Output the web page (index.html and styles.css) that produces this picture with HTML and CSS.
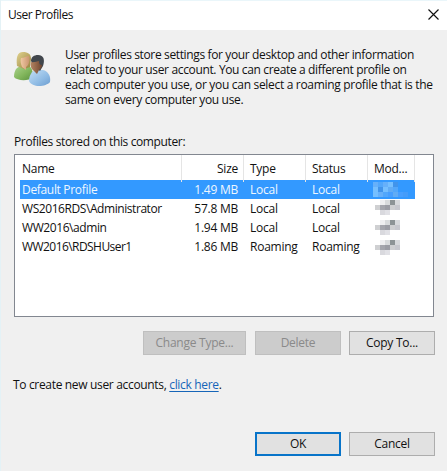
FILE: index.html
```html
<!DOCTYPE html>
<html lang="en">
<head>
<meta charset="utf-8">
<title>User Profiles</title>
<link rel="stylesheet" href="styles.css">
</head>
<body>
<svg width="0" height="0" class="defs" aria-hidden="true">
  <defs>
    <g id="mosaic" shape-rendering="crispEdges">
      <path fill="#eeeef1" d="M5 0h5v5H5z"/><path fill="#d8dadd" d="M10 0h5v5h-5zM20 0h5v5h-5z"/><path fill="#8d9496" d="M15 0h5v5h-5z"/>
      <path fill="#cfd0d2" d="M0 5h5v5H0zM15 5h5v5h-5z"/><path fill="#a4a5ad" d="M5 5h5v5H5z"/><path fill="#9b9ca5" d="M10 5h5v5h-5z"/><path fill="#c8c9cf" d="M20 5h5v5h-5z"/>
      <path fill="#d9d9de" d="M5 10h5v5H5z"/><path fill="#e1e1e6" d="M10 10h5v5h-5z"/>
    </g>
  </defs>
</svg>
<div class="dialog">
  <header class="titlebar">
    <span class="title">User Profiles</span>
    <svg class="close" width="11" height="11" viewBox="0 0 11 11"><path d="M.5.5l10 10M10.500.5l-10 10" fill="none" stroke="#111" stroke-width="1.15"/></svg>
  </header>
  <section class="intro">
    <svg class="users" width="38" height="38" viewBox="0 0 38 38">
      <defs>
        <linearGradient id="green" x2="1" y2="1"><stop stop-color="#acd28e"/><stop offset=".55" stop-color="#82b65c"/><stop offset="1" stop-color="#5a9140"/></linearGradient>
        <linearGradient id="blue" x2="1" y2="1"><stop stop-color="#c3dff6"/><stop offset=".6" stop-color="#8fbbe4"/><stop offset="1" stop-color="#6c9dd0"/></linearGradient>
        <linearGradient id="hair" x2="1" y2="1"><stop stop-color="#e1d38f"/><stop offset="1" stop-color="#97803d"/></linearGradient>
        <linearGradient id="skin" x2="1"><stop stop-color="#f0c8a2"/><stop offset="1" stop-color="#ca9570"/></linearGradient>
        <linearGradient id="face" x2="1"><stop stop-color="#b58462"/><stop offset="1" stop-color="#70452f"/></linearGradient>
      </defs>
      <path d="M1 26C1 19 4 16 8 15h8c3 2 4 5 4 12-5 3-16 3-19-1z" fill="url(#green)"/>
      <path d="M4 15C3 7 4 1 10 1c5 0 8 2 8 7l-1 8-6 2z" fill="url(#hair)"/>
      <path d="M8 7c3 0 6-2 8-2 1 4 0 9-3 11v3l-4-3c-1-3-2-6-1-9z" fill="url(#skin)"/>
      <path d="M16 30c0-6 3-10 7-11h7c5 1 8 6 7 12-4 5-18 6-21-1z" fill="url(#blue)"/>
      <path d="M18 10c0-4 3-6 7-6 6 0 7 5 5 11l-3 5-6-5z" fill="#41464c"/>
      <path d="M18 11c3 1 6-1 8-1 0 3 1 4 3 4 0 3-2 4-3 5l-2 4-3-3c-3-2-4-5-3-9z" fill="url(#face)"/>
    </svg>
    <p class="copy"><span class="l1">User profiles store settings for your desktop and other information</span><span class="l2">related to your user account. You can create a different profile on</span><span class="l3">each computer you use, or you can select a roaming profile that is the</span><span class="l4">same on every computer you use.</span></p>
  </section>
  <p class="label"><span>Profiles stored on this computer:</span></p>
  <div class="list">
    <div class="row head"><span>Name</span><span>Size</span><span>Type</span><span>Status</span><span>Mod...</span></div>
    <div class="row selected"><span class="n1">Default Profile</span><span>1.49 MB</span><span>Local</span><span>Local</span><span class="mark"><svg width="35" height="15" shape-rendering="crispEdges"><path fill="#66b0fa" d="M0 0h5v5H0zM10 0h5v5h-5zM5 10h5v5H5z"/><path fill="#52a7fb" d="M5 0h5v5H5zM20 5h5v5h-5zM10 10h5v5h-5z"/><path fill="#75bfff" d="M15 0h5v5h-5zM0 5h5v5H0zM10 5h5v5h-5zM0 10h5v5H0z"/><path fill="#4194eb" d="M5 5h5v5H5zM20 0h5v5h-5z"/><path fill="#61acf5" d="M15 5h5v5h-5zM20 10h5v5h-5z"/><path fill="#479fff" d="M15 10h5v5h-5zM25 10h5v5h-5z"/><path fill="#459cf9" d="M30 10h5v5h-5z"/></svg></span></div>
    <div class="row"><span class="n2">WS2016RDS\Administrator</span><span>57.8 MB</span><span>Local</span><span>Local</span><span class="mark m1"><svg width="25" height="15"><use href="#mosaic"/></svg></span></div>
    <div class="row"><span class="n3">WW2016\admin</span><span>1.94 MB</span><span>Local</span><span>Local</span><span class="mark m2"><svg width="25" height="15"><use href="#mosaic"/></svg></span></div>
    <div class="row"><span class="n4">WW2016\RDSHUser1</span><span>1.86 MB</span><span class="roam">Roaming</span><span class="roam">Roaming</span><span class="mark m3"><svg width="25" height="15"><use href="#mosaic"/></svg></span></div>
  </div>
  <div class="buttons">
    <button class="wide" disabled>Change Type...</button><button disabled>Delete</button><button>Copy To...</button>
  </div>
  <p class="accounts">To create new user accounts, <a href="#">click here</a>.</p>
  <footer class="buttons footer"><button class="default">OK</button><button>Cancel</button></footer>
</div>
</body>
</html>
```
FILE: styles.css
```css
* { box-sizing: border-box; }
body { margin: 0; background: #f0f0f0; color: #111; font: 12px/15px "Open Sans", "Noto Sans", sans-serif; letter-spacing: -.25px; overflow: hidden; }
p { margin: 0; }
.defs { position: absolute; }
.dialog { width: 447px; height: 471px; border-left: 1px solid #e4f2f6; display: flex; flex-direction: column; }
.titlebar { height: 30px; background: #fff; border-top: 1px solid #eaf6fa; display: flex; justify-content: space-between; align-items: center; padding: 0 8px 2px 7px; flex: none; }
.title { letter-spacing: -.48px; }
.intro { display: flex; padding: 21px 0 0 12px; height: 104px; flex: none; }
.users { margin-right: 14px; flex: none; }
.copy { margin-top: -4px; white-space: nowrap; }
.copy span { display: block; }
.l1 { letter-spacing: -.365px; }
.l2 { letter-spacing: -.355px; }
.l3 { letter-spacing: -.31px; }
.l4 { letter-spacing: -.35px; }
.label { height: 20px; padding-left: 13px; letter-spacing: -.37px; flex: none; }
.list { width: 420px; height: 163px; margin-left: 13px; border: 1px solid #828790; background: #fff; padding-left: 5px; flex: none; }
.row { display: grid; grid-template-columns: 162px 62px 62px 62px 47px; width: 395px; height: 19px; line-height: 19px; white-space: nowrap; }
.row > span { padding-left: 6px; }
.row > span:first-child { padding-left: 2px; }
.row > span:nth-child(2) { text-align: right; padding: 0 6px 0 0; }
.row > .n1 { letter-spacing: -.32px; }
.row > .n2 { letter-spacing: -.43px; }
.row > .n3 { letter-spacing: -.42px; }
.row > .n4 { letter-spacing: -.56px; }
.head { height: 25px; line-height: 27px; }
.head > span { border-right: 1px solid #e5e5e5; }
.row.head > span:nth-child(2) { padding-right: 5px; }
.selected { background: #3399ff; color: #eef7ff; }
.row > .mark { padding: 2px 0 0 5px; line-height: 0; }
.row > .m1 { padding: 1px 0 0 7px; }
.row > .m2 { padding: 2px 0 0 7px; }
.row > .m3 { padding: 3px 0 0 7px; }
.buttons { display: flex; justify-content: flex-end; gap: 8px; margin: 14px 12px 0 0; flex: none; }
button { width: 86px; height: 24px; padding: 0 0 1px; border: 1px solid #adadad; background: #e1e1e1; color: #111; font: inherit; letter-spacing: -.25px; }
button.wide { width: 103px; margin-right: 1px; }
button:disabled { background: #ccc; border-color: #bfbfbf; color: #8a8a8a; }
button.default { border: 2px solid #0874c9; }
.accounts { margin-top: 22px; padding-left: 12px; height: 15px; letter-spacing: -.33px; flex: none; }
a { color: #1665b8; text-underline-offset: 2px; }
.footer { margin-top: 40px; }
```
